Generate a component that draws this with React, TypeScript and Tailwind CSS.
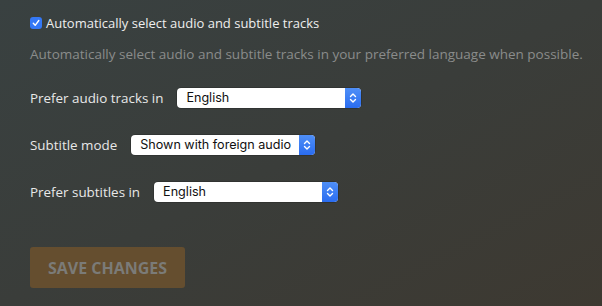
import React from 'react'

const Stepper = () => (
  <div className="flex h-full w-[16px] items-center justify-center rounded-r-[4px] bg-linear-to-b from-[#4f8ff7] to-[#2a6cf0]">
    <svg width="8" height="12" viewBox="0 0 8 12" fill="none">
      <path d="M1.5 4.5 L4 2 L6.5 4.5" stroke="white" strokeWidth="1.4" strokeLinecap="round" strokeLinejoin="round" />
      <path d="M1.5 7.5 L4 10 L6.5 7.5" stroke="white" strokeWidth="1.4" strokeLinecap="round" strokeLinejoin="round" />
    </svg>
  </div>
)

const FakeSelect = ({ value }: { value: string }) => (
  <div className="flex h-[20px] w-[184px] items-center rounded-[4px] bg-white shadow-[0_0_0_0.5px_rgba(0,0,0,0.3)]">
    <span className="flex-1 pl-[9px] text-[12.6px] leading-none text-[#111] [font-family:Inter,'Liberation_Sans',sans-serif]">
      {value}
    </span>
    <Stepper />
  </div>
)

const rows = [
  { label: 'Prefer audio tracks in', value: 'English' },
  { label: 'Subtitle mode', value: 'Shown with foreign audio' },
  { label: 'Prefer subtitles in', value: 'English' },
]

export default function App() {
  return (
    <div className="h-[306px] w-full overflow-hidden bg-linear-to-br from-[#394141] via-[#3a3d3a] to-[#3d3931] pl-[30px] pt-[16px] [font-family:'Open_Sans',sans-serif]">
      {/* Checkbox */}
      <label className="flex h-[14px] items-center gap-[4px]">
        <span className="flex h-[12px] w-[12px] items-center justify-center rounded-[3px] bg-[#3478f6]">
          <svg width="8" height="8" viewBox="0 0 8 8" fill="none">
            <path d="M1.3 4.3 L3.2 6.3 L6.8 1.5" stroke="white" strokeWidth="1.4" strokeLinecap="round" strokeLinejoin="round" />
          </svg>
        </span>
        <span className="text-[13px] leading-none text-[#eeeeee]">Automatically select audio and subtitle tracks</span>
      </label>

      <p className="mt-[15px] text-[13.5px] leading-[18px] text-[#8a8c8b]">
        Automatically select audio and subtitle tracks in your preferred language when possible.
      </p>

      <div className="mt-[25px] flex flex-col gap-[27px]">
        {rows.map(({ label, value }) => (
          <div key={label} className="flex items-center gap-[14px]">
            <span className="text-[13.4px] leading-[20px] text-[#e8e8e8]">{label}</span>
            <FakeSelect value={value} />
          </div>
        ))}
      </div>

      <button className="mt-[45px] h-[41px] w-[155px] rounded-[3px] bg-[#654e2f] text-[16px] font-bold text-[#7b7b78]">
        SAVE CHANGES
      </button>
    </div>
  )
}
